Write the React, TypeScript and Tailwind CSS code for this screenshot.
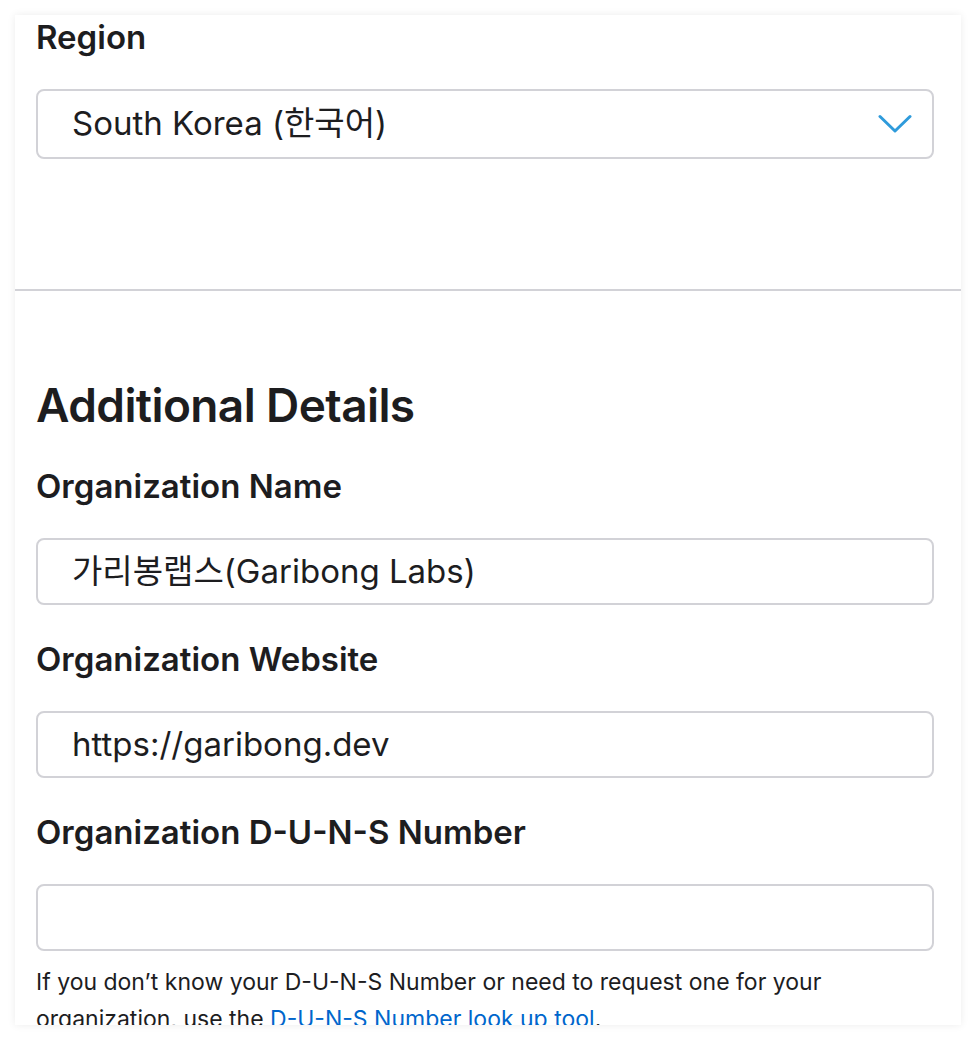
const font = { fontFamily: 'Inter, "Noto Sans CJK KR", sans-serif' };

function Field({ label, value }: { label: string; value?: string }) {
  return (
    <div>
      <div className="text-[33px] leading-[40px] font-semibold text-[#1d1d1f]">{label}</div>
      <div className="mt-[32px] h-[67px] rounded-[8px] border-2 border-[#d2d2d7] flex items-center px-[34px] text-[33px] text-[#1d1d1f]">
        {value}
      </div>
    </div>
  );
}

export default function App() {
  return (
    <div className="min-h-screen bg-white pt-[15px]" style={font}>
      <div className="ml-[15px] w-[946px] h-[1010px] overflow-hidden bg-white shadow-[0_0_8px_rgba(0,0,0,0.08)]">
        {/* Region */}
        <div className="pl-[21px] pr-[27px] pt-[2px]">
          <div className="text-[33px] leading-[40px] font-semibold text-[#1d1d1f]">Region</div>
          <div className="mt-[32px] h-[70px] rounded-[8px] border-2 border-[#d2d2d7] flex items-center justify-between pl-[34px] pr-[20px]">
            <span className="text-[33px] text-[#1d1d1f]">South Korea (한국어)</span>
            <svg width="34" height="20" viewBox="0 0 34 20" fill="none">
              <path d="M2 2.5 L17 17 L32 2.5" stroke="#2f9bdb" strokeWidth="3" strokeLinecap="round" strokeLinejoin="round" />
            </svg>
          </div>
        </div>

        <div className="mt-[130px] h-[2px] bg-[#d2d2d7]" />

        {/* Additional details */}
        <div className="pl-[21px] pr-[27px] pt-[86px]">
          <h2 className="text-[46px] leading-[56px] font-semibold text-[#1d1d1f] tracking-[-0.6px]">Additional Details</h2>
          <div className="mt-[33px] flex flex-col gap-[34px]">
            <Field label="Organization Name" value="가리봉랩스(Garibong Labs)" />
            <Field label="Organization Website" value="https://garibong.dev" />
            <Field label="Organization D-U-N-S Number" />
          </div>
          <p className="mt-[13px] text-[23px] leading-[37px] text-[#1d1d1f]">
            If you don’t know your D-U-N-S Number or need to request one for your organization, use the{' '}
            <a className="text-[#0066cc]" href="#">D-U-N-S Number look up tool</a>.
          </p>
        </div>
      </div>
    </div>
  );
}
